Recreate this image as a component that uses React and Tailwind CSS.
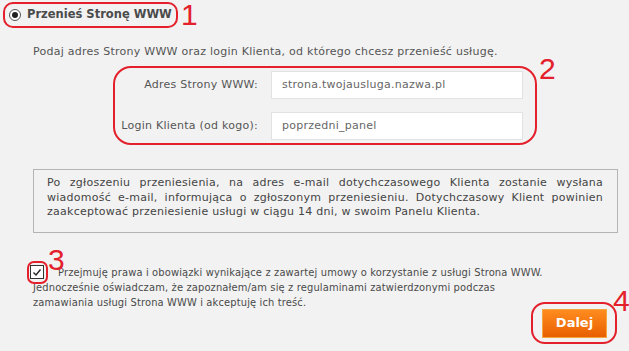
import React from "react";

const RED = "border-[#e3202b]";

function Mark({ n, className }) {
  return (
    <span className={"absolute font-['Liberation_Sans',sans-serif] text-[30px] leading-none text-[#e3202b] " + className}>
      {n}
    </span>
  );
}

function Field({ label, value }) {
  return (
    <div className="flex items-center">
      <label className="w-[143px] text-right">{label}</label>
      <div className="ml-[13px] w-[252px] h-[28px] bg-white border border-[#e2e2e2] flex items-center px-[10px] text-[#666]">
        {value}
      </div>
    </div>
  );
}

export default function App() {
  return (
    <div className="w-[629px] h-[351px] overflow-hidden bg-[#f2f2f2] font-['DejaVu_Sans',sans-serif] text-[11px] tracking-[0.25px] text-[#555]">
      {/* wybór opcji */}
      <div className="pl-[3px] pt-[2px]">
        <div className={"relative w-[175px] h-[26px] rounded-[10px] border-2 flex items-center gap-[6px] pl-[4px] " + RED}>
          <span className="flex items-center justify-center w-[12px] h-[12px] rounded-full border border-[#555] bg-white">
            <span className="w-[6px] h-[6px] rounded-full bg-[#222]" />
          </span>
          <span className="font-bold text-[11.5px] tracking-normal text-[#4a4a4a]">Przenieś Stronę WWW</span>
          <Mark n="1" className="left-[176px] top-[-4px]" />
        </div>
      </div>

      <p className="pl-[33px] pt-[17px] leading-[14px]">
        Podaj adres Strony WWW oraz login Klienta, od którego chcesz przenieść usługę.
      </p>

      {/* formularz */}
      <div className={"relative ml-[113px] mt-[7px] w-[424px] h-[79px] rounded-[18px] border-2 flex flex-col gap-[13px] pt-[3px] " + RED}>
        <Field label="Adres Strony WWW:" value="strona.twojausluga.nazwa.pl" />
        <Field label="Login Klienta (od kogo):" value="poprzedni_panel" />
        <Mark n="2" className="left-[424px] top-[-14px]" />
      </div>

      {/* informacja */}
      <div className="ml-[33px] mt-[24px] w-[585px] h-[64px] border border-[#b4b4b4] pl-[13px] pr-[14px] pt-[6px] text-[#444] leading-[14.5px] text-justify">
        Po zgłoszeniu przeniesienia, na adres e-mail dotychczasowego Klienta zostanie wysłana wiadomość e-mail, informująca o zgłoszonym przeniesieniu. Dotychczasowy Klient powinien zaakceptować przeniesienie usługi w ciągu 14 dni, w swoim Panelu Klienta.
      </div>

      {/* zgoda */}
      <p className="pl-[30px] pt-[32px] leading-[15px] font-['DejaVu_Sans_Condensed','DejaVu_Sans',sans-serif] tracking-[0.15px] text-[#4a4a4a]">
        <span className="relative inline-block align-[-3px] w-[14px] h-[14px] border border-[#333] bg-white mr-[14px]">
          <svg className="absolute left-[1px] top-[2px]" width="10" height="9" viewBox="0 0 10 9">
            <path d="M1.5 4.5 L4 7 L8.5 1.5" fill="none" stroke="#222" strokeWidth="1.4" />
          </svg>
          <span className={"absolute left-[-4px] top-[-5px] w-[21px] h-[23px] rounded-[7px] border-2 " + RED} />
          <Mark n="3" className="left-[17px] top-[-21px]" />
        </span>
        Przejmuję prawa i obowiązki wynikające z zawartej umowy o korzystanie z usługi Strona WWW.
        <br />
        <span className="pl-[3px]">Jednocześnie oświadczam, że zapoznałem/am się z regulaminami zatwierdzonymi podczas</span>
        <br />
        <span className="pl-[3px]">zamawiania usługi Strona WWW i akceptuję ich treść.</span>
      </p>

      <div className="flex justify-end pr-[12px] mt-[-8px]">
        <div className={"relative w-[86px] h-[42px] rounded-[14px] border-2 flex items-center justify-center pl-[1px] " + RED}>
          <button className="w-[65px] h-[29px] bg-gradient-to-b from-[#ff8c1e] to-[#e85f00] border border-[#f5a640] text-white font-bold text-[13px] tracking-normal">
            Dalej
          </button>
          <Mark n="4" className="left-[80px] top-[-18px]" />
        </div>
      </div>
    </div>
  );
}
